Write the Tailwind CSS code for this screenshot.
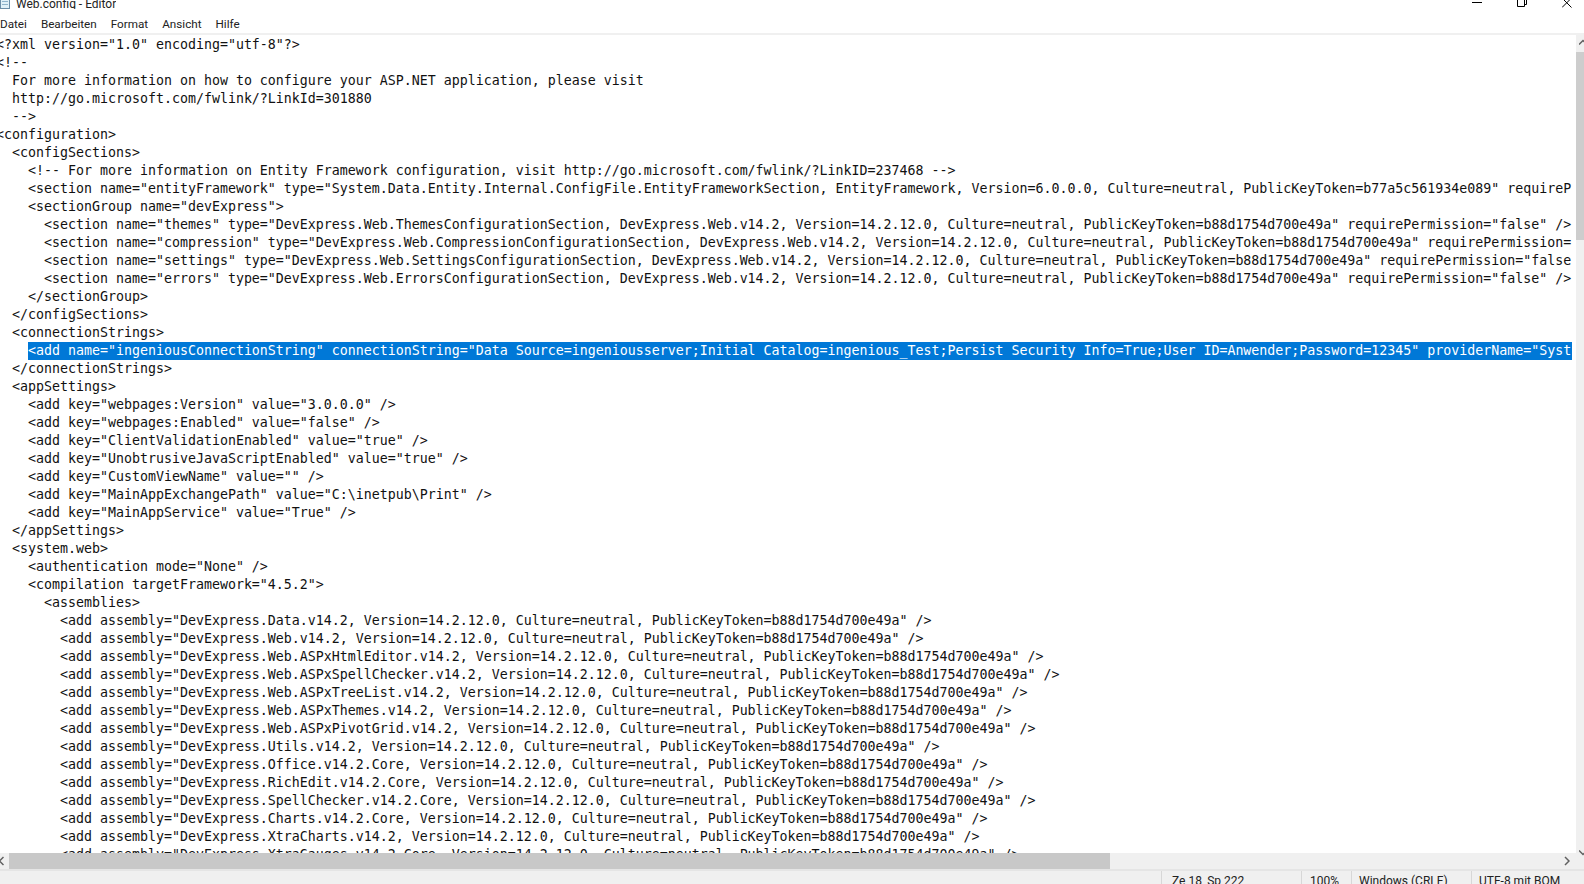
<!DOCTYPE html>
<html lang="de">
<head>
  <meta charset="UTF-8">
  <title>Web.config - Editor</title>
  <script src="https://cdn.jsdelivr.net/npm/@tailwindcss/browser@4"></script>
</head>
<body class="bg-white text-black overflow-hidden">
  <div class="h-[884px] w-[1584px] flex flex-col overflow-hidden font-['Roboto','Liberation_Sans',sans-serif]">
    <!-- Titelleiste -->
    <div class="h-[16px] shrink-0 flex items-start justify-between text-[12px] leading-[9px] text-[#222]">
      <div class="flex items-start h-[9px] gap-[6px] overflow-hidden">
        <svg width="10" height="9" viewBox="0 0 10 9"><rect x="0.5" y="-3" width="9" height="11.500" fill="#dff0f8" stroke="#6b8ea8"/><path d="M2 1.500h6M2 4.500h6" stroke="#8fb4cc"/></svg>
        <span>Web.config - Editor</span>
      </div>
      <div class="flex items-start pr-[12px] gap-[35px]">
        <svg width="10" height="8" viewBox="0 0 10 8"><path d="M0 2.500h10" stroke="#000"/></svg>
        <svg width="10" height="8" viewBox="0 0 10 8" fill="none"><path d="M.5 0v6.500h7V0M7.500 4.500h2V0" stroke="#000"/></svg>
        <svg width="10" height="8" viewBox="0 0 10 8" fill="none"><path d="M0 -2l9.500 9.500M9.500 -2L0 7.500" stroke="#000"/></svg>
      </div>
    </div>

    <!-- Menü -->
    <div class="h-[17px] shrink-0 flex items-center gap-[14px] text-[11.7px] text-[#222]">
      <span>Datei</span><span>Bearbeiten</span><span>Format</span><span>Ansicht</span><span>Hilfe</span>
    </div>
    <div class="h-[2px] shrink-0 bg-[#f0f0f0]"></div>

    <!-- Editor -->
    <div class="flex-1 min-h-0 flex">
      <div class="flex-1 min-w-0 flex flex-col">
        <pre class="flex-1 min-h-0 overflow-hidden -ml-[4px] mr-[4px] pt-[1px] font-['DejaVu_Sans_Mono','Liberation_Mono',monospace] text-[13.29px] leading-[18px] text-[#111]"><div>&lt;?xml version="1.0" encoding="utf-8"?&gt;</div><div>&lt;!--</div><div>  For more information on how to configure your ASP.NET application, please visit</div><div>  http://go.microsoft.com/fwlink/?LinkId=301880</div><div>  --&gt;</div><div>&lt;configuration&gt;</div><div>  &lt;configSections&gt;</div><div>    &lt;!-- For more information on Entity Framework configuration, visit http://go.microsoft.com/fwlink/?LinkID=237468 --&gt;</div><div>    &lt;section name="entityFramework" type="System.Data.Entity.Internal.ConfigFile.EntityFrameworkSection, EntityFramework, Version=6.0.0.0, Culture=neutral, PublicKeyToken=b77a5c561934e089" requireP</div><div>    &lt;sectionGroup name="devExpress"&gt;</div><div>      &lt;section name="themes" type="DevExpress.Web.ThemesConfigurationSection, DevExpress.Web.v14.2, Version=14.2.12.0, Culture=neutral, PublicKeyToken=b88d1754d700e49a" requirePermission="false" /&gt;</div><div>      &lt;section name="compression" type="DevExpress.Web.CompressionConfigurationSection, DevExpress.Web.v14.2, Version=14.2.12.0, Culture=neutral, PublicKeyToken=b88d1754d700e49a" requirePermission=</div><div>      &lt;section name="settings" type="DevExpress.Web.SettingsConfigurationSection, DevExpress.Web.v14.2, Version=14.2.12.0, Culture=neutral, PublicKeyToken=b88d1754d700e49a" requirePermission="false</div><div>      &lt;section name="errors" type="DevExpress.Web.ErrorsConfigurationSection, DevExpress.Web.v14.2, Version=14.2.12.0, Culture=neutral, PublicKeyToken=b88d1754d700e49a" requirePermission="false" /&gt;</div><div>    &lt;/sectionGroup&gt;</div><div>  &lt;/configSections&gt;</div><div>  &lt;connectionStrings&gt;</div><div>    <span class="bg-[#0078d7] text-white inline-block w-[1544px] overflow-hidden align-top">&lt;add name="ingeniousConnectionString" connectionString="Data Source=ingeniousserver;Initial Catalog=ingenious_Test;Persist Security Info=True;User ID=Anwender;Password=12345" providerName="Syst</span></div><div>  &lt;/connectionStrings&gt;</div><div>  &lt;appSettings&gt;</div><div>    &lt;add key="webpages:Version" value="3.0.0.0" /&gt;</div><div>    &lt;add key="webpages:Enabled" value="false" /&gt;</div><div>    &lt;add key="ClientValidationEnabled" value="true" /&gt;</div><div>    &lt;add key="UnobtrusiveJavaScriptEnabled" value="true" /&gt;</div><div>    &lt;add key="CustomViewName" value="" /&gt;</div><div>    &lt;add key="MainAppExchangePath" value="C:\inetpub\Print" /&gt;</div><div>    &lt;add key="MainAppService" value="True" /&gt;</div><div>  &lt;/appSettings&gt;</div><div>  &lt;system.web&gt;</div><div>    &lt;authentication mode="None" /&gt;</div><div>    &lt;compilation targetFramework="4.5.2"&gt;</div><div>      &lt;assemblies&gt;</div><div>        &lt;add assembly="DevExpress.Data.v14.2, Version=14.2.12.0, Culture=neutral, PublicKeyToken=b88d1754d700e49a" /&gt;</div><div>        &lt;add assembly="DevExpress.Web.v14.2, Version=14.2.12.0, Culture=neutral, PublicKeyToken=b88d1754d700e49a" /&gt;</div><div>        &lt;add assembly="DevExpress.Web.ASPxHtmlEditor.v14.2, Version=14.2.12.0, Culture=neutral, PublicKeyToken=b88d1754d700e49a" /&gt;</div><div>        &lt;add assembly="DevExpress.Web.ASPxSpellChecker.v14.2, Version=14.2.12.0, Culture=neutral, PublicKeyToken=b88d1754d700e49a" /&gt;</div><div>        &lt;add assembly="DevExpress.Web.ASPxTreeList.v14.2, Version=14.2.12.0, Culture=neutral, PublicKeyToken=b88d1754d700e49a" /&gt;</div><div>        &lt;add assembly="DevExpress.Web.ASPxThemes.v14.2, Version=14.2.12.0, Culture=neutral, PublicKeyToken=b88d1754d700e49a" /&gt;</div><div>        &lt;add assembly="DevExpress.Web.ASPxPivotGrid.v14.2, Version=14.2.12.0, Culture=neutral, PublicKeyToken=b88d1754d700e49a" /&gt;</div><div>        &lt;add assembly="DevExpress.Utils.v14.2, Version=14.2.12.0, Culture=neutral, PublicKeyToken=b88d1754d700e49a" /&gt;</div><div>        &lt;add assembly="DevExpress.Office.v14.2.Core, Version=14.2.12.0, Culture=neutral, PublicKeyToken=b88d1754d700e49a" /&gt;</div><div>        &lt;add assembly="DevExpress.RichEdit.v14.2.Core, Version=14.2.12.0, Culture=neutral, PublicKeyToken=b88d1754d700e49a" /&gt;</div><div>        &lt;add assembly="DevExpress.SpellChecker.v14.2.Core, Version=14.2.12.0, Culture=neutral, PublicKeyToken=b88d1754d700e49a" /&gt;</div><div>        &lt;add assembly="DevExpress.Charts.v14.2.Core, Version=14.2.12.0, Culture=neutral, PublicKeyToken=b88d1754d700e49a" /&gt;</div><div>        &lt;add assembly="DevExpress.XtraCharts.v14.2, Version=14.2.12.0, Culture=neutral, PublicKeyToken=b88d1754d700e49a" /&gt;</div><div>        &lt;add assembly="DevExpress.XtraGauges.v14.2.Core, Version=14.2.12.0, Culture=neutral, PublicKeyToken=b88d1754d700e49a" /&gt;</div></pre>
        <!-- horizontale Scrollleiste -->
        <div class="h-[16px] shrink-0 bg-[#f0f0f0] flex items-center">
          <div class="w-[9px] h-full flex items-center">
            <svg width="4" height="10" viewBox="0 0 4 10" fill="none"><path d="M3.500 1L-.5 5l4 4" stroke="#606060" stroke-width="1.500"/></svg>
          </div>
          <div class="w-[1101px] h-full bg-[#c8c8c8]"></div>
          <div class="flex-1 h-full flex items-center justify-end pr-[6px]">
            <svg width="6" height="10" viewBox="0 0 6 10" fill="none"><path d="M1 1l4 4-4 4" stroke="#606060" stroke-width="1.500"/></svg>
          </div>
        </div>
      </div>
      <!-- vertikale Scrollleiste -->
      <div class="w-[8px] shrink-0 bg-[#f0f0f0] flex flex-col">
        <div class="h-[17px] shrink-0 pt-[4px] pl-[3px]">
          <svg width="5" height="6" viewBox="0 0 5 6" fill="none"><path d="M0 5.500L4 1.500l4 4" stroke="#606060" stroke-width="1.500"/></svg>
        </div>
        <div class="h-[188px] shrink-0 bg-[#cdcdcd]"></div>
        <div class="mt-auto mb-[13px] pl-[3px] h-[6px]">
          <svg width="5" height="6" viewBox="0 0 5 6" fill="none"><path d="M0 .500l4 4 4-4" stroke="#606060" stroke-width="1.500"/></svg>
        </div>
      </div>
    </div>

    <!-- Statusleiste -->
    <div class="h-[15px] shrink-0 border-t-2 border-[#e5e5e5] bg-[#f0f0f0] flex text-[12px] leading-[20px] text-[#222] overflow-hidden">
      <div class="flex-1"></div>
      <div class="w-[140px] border-l border-[#d7d7d7] pl-[10px]">Ze 18, Sp 222</div>
      <div class="w-[50px] border-l border-[#d7d7d7] pl-[8px]">100%</div>
      <div class="w-[120px] border-l border-[#d7d7d7] pl-[7px]">Windows (CRLF)</div>
      <div class="w-[113px] border-l border-[#d7d7d7] pl-[7px]">UTF-8 mit BOM</div>
    </div>
  </div>
</body>
</html>
